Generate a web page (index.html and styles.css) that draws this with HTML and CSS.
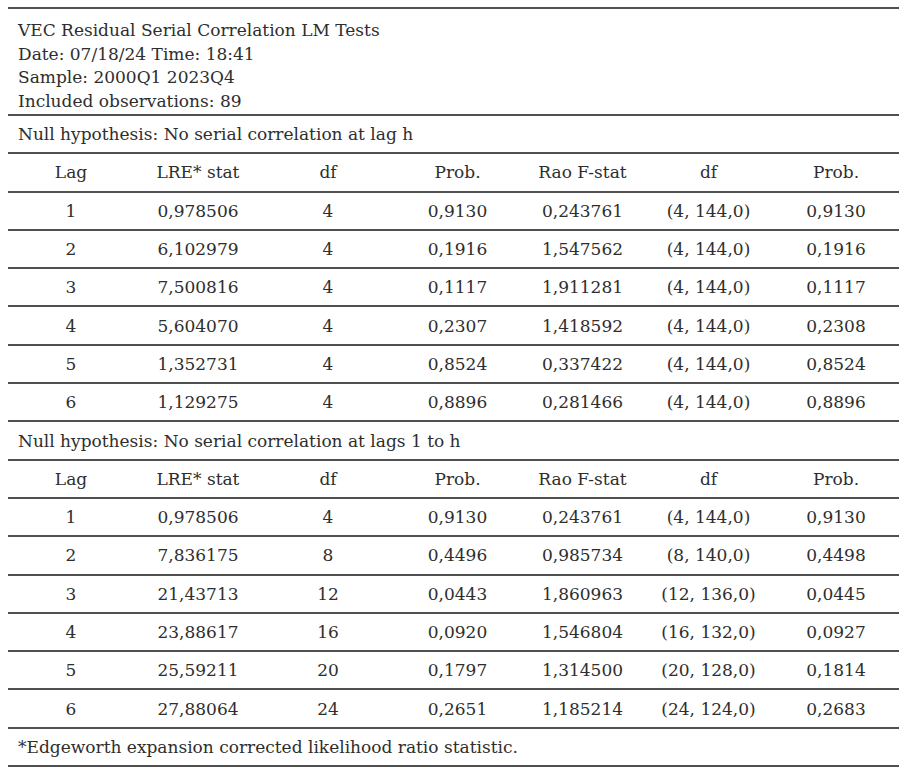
FILE: index.html
```html
<!DOCTYPE html>
<html>
<head>
<meta charset="utf-8">
<link rel="stylesheet" href="styles.css">
</head>
<body>
<div class="report">
  <div class="info">
    <div>VEC Residual Serial Correlation LM Tests</div>
    <div>Date: 07/18/24 Time: 18:41</div>
    <div>Sample: 2000Q1 2023Q4</div>
    <div>Included observations: 89</div>
  </div>
  <div class="caption">Null hypothesis: No serial correlation at lag h</div>
  <div class="row">
    <span>Lag</span><span>LRE* stat</span><span>df</span><span class="p">Prob.</span><span>Rao F-stat</span><span>df</span><span>Prob.</span>
  </div>
  <div class="row"><span>1</span><span>0,978506</span><span>4</span><span class="p">0,9130</span><span>0,243761</span><span>(4, 144,0)</span><span>0,9130</span></div>
  <div class="row"><span>2</span><span>6,102979</span><span>4</span><span class="p">0,1916</span><span>1,547562</span><span>(4, 144,0)</span><span>0,1916</span></div>
  <div class="row"><span>3</span><span>7,500816</span><span>4</span><span class="p">0,1117</span><span>1,911281</span><span>(4, 144,0)</span><span>0,1117</span></div>
  <div class="row"><span>4</span><span>5,604070</span><span>4</span><span class="p">0,2307</span><span>1,418592</span><span>(4, 144,0)</span><span>0,2308</span></div>
  <div class="row"><span>5</span><span>1,352731</span><span>4</span><span class="p">0,8524</span><span>0,337422</span><span>(4, 144,0)</span><span>0,8524</span></div>
  <div class="row"><span>6</span><span>1,129275</span><span>4</span><span class="p">0,8896</span><span>0,281466</span><span>(4, 144,0)</span><span>0,8896</span></div>
  <div class="caption">Null hypothesis: No serial correlation at lags 1 to h</div>
  <div class="row">
    <span>Lag</span><span>LRE* stat</span><span>df</span><span class="p">Prob.</span><span>Rao F-stat</span><span>df</span><span>Prob.</span>
  </div>
  <div class="row"><span>1</span><span>0,978506</span><span>4</span><span class="p">0,9130</span><span>0,243761</span><span>(4, 144,0)</span><span>0,9130</span></div>
  <div class="row"><span>2</span><span>7,836175</span><span>8</span><span class="p">0,4496</span><span>0,985734</span><span>(8, 140,0)</span><span>0,4498</span></div>
  <div class="row"><span>3</span><span>21,43713</span><span>12</span><span class="p">0,0443</span><span>1,860963</span><span>(12, 136,0)</span><span>0,0445</span></div>
  <div class="row"><span>4</span><span>23,88617</span><span>16</span><span class="p">0,0920</span><span>1,546804</span><span>(16, 132,0)</span><span>0,0927</span></div>
  <div class="row"><span>5</span><span>25,59211</span><span>20</span><span class="p">0,1797</span><span>1,314500</span><span>(20, 128,0)</span><span>0,1814</span></div>
  <div class="row"><span>6</span><span>27,88064</span><span>24</span><span class="p">0,2651</span><span>1,185214</span><span>(24, 124,0)</span><span>0,2683</span></div>
  <div class="caption">*Edgeworth expansion corrected likelihood ratio statistic.</div>
</div>
</body>
</html>
```
FILE: styles.css
```css
html, body {
  margin: 0;
  padding: 0;
  background: #ffffff;
}
body {
  padding: 7px 5px 0 8px;
}
.report {
  width: 891px;
  border-top: 2px solid #505050;
  font-family: "DejaVu Serif", serif;
  font-size: 17px;
  color: #2e2e2e;
}
.info {
  height: 107px;
  box-sizing: border-box;
  padding: 10px 0 0 10px;
  line-height: 23.7px;
  border-bottom: 2px solid #505050;
}
.caption {
  height: 38.3px;
  box-sizing: border-box;
  padding-left: 10px;
  display: flex;
  align-items: center;
  border-bottom: 2px solid #505050;
}
.row {
  height: 38.3px;
  box-sizing: border-box;
  display: grid;
  grid-template-columns: 126px 128px 132px 127px 123px 129px 126px;
  align-items: center;
  text-align: center;
  border-bottom: 2px solid #505050;
}
```
